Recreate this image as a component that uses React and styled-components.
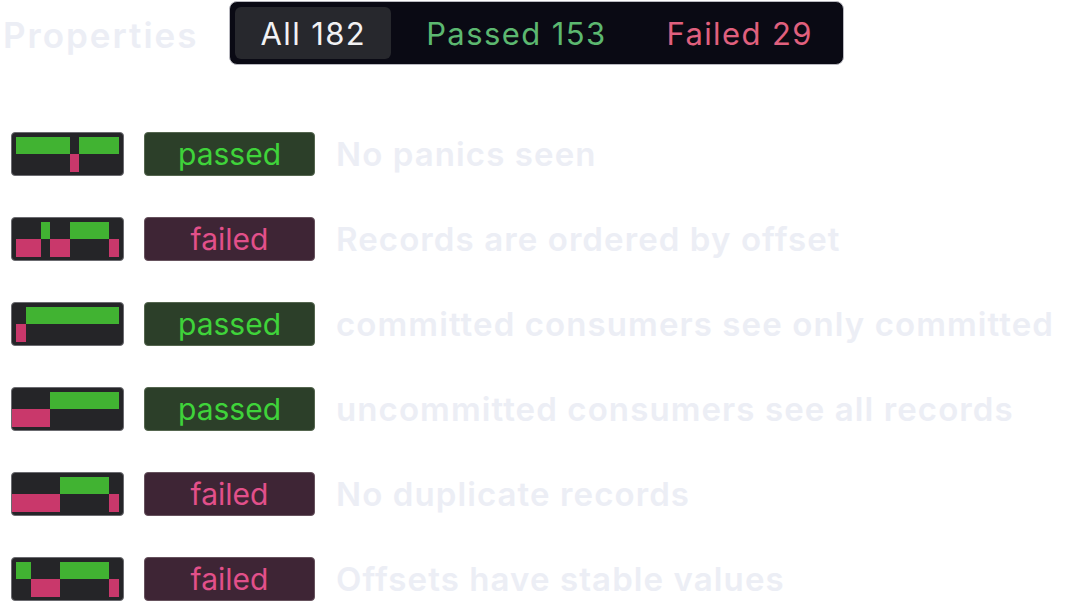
import React from "react";
import styled, { createGlobalStyle } from "styled-components";

const GlobalStyle = createGlobalStyle`
  html, body {
    margin: 0;
    padding: 0;
    background: #ffffff;
    font-family: Inter, "Noto Sans", sans-serif;
  }
`;

const TOP = { y: 5, h: 17, color: "#41b332" };
const BOTTOM = { y: 22, h: 18, color: "#c9386b" };

// segments as [lane, from, to] in px inside the 113x44 timeline
const properties = [
  {
    name: "No panics seen",
    passed: true,
    segments: [["t", 5, 59], ["b", 59, 68], ["t", 68, 108]],
  },
  {
    name: "Records are ordered by offset",
    passed: false,
    segments: [["b", 5, 30], ["t", 30, 39], ["b", 39, 59], ["t", 59, 98], ["b", 98, 108]],
  },
  {
    name: "committed consumers see only committed",
    passed: true,
    segments: [["b", 5, 15], ["t", 15, 108]],
  },
  {
    name: "uncommitted consumers see all records",
    passed: true,
    segments: [["b", 0, 39], ["t", 39, 108]],
  },
  {
    name: "No duplicate records",
    passed: false,
    segments: [["b", 0, 49], ["t", 49, 98], ["b", 98, 108]],
  },
  {
    name: "Offsets have stable values",
    passed: false,
    segments: [["t", 5, 20], ["b", 20, 49], ["t", 49, 98], ["b", 98, 108]],
  },
];

const Timeline = ({ segments }) => (
  <TimelineBox>
    <svg width="113" height="44" viewBox="0 0 113 44">
      {segments.map(([lane, from, to], i) => {
        const l = lane === "t" ? TOP : BOTTOM;
        return <rect key={i} x={from} y={l.y} width={to - from} height={l.h} fill={l.color} />;
      })}
    </svg>
  </TimelineBox>
);

const App = () => {
  const [filter, setFilter] = React.useState("all");

  return (
    <>
      <GlobalStyle />
      <Page>
        <Header>
          <Title>Properties</Title>
          <Tabs>
            <Tab active={filter === "all"} onClick={() => setFilter("all")}>
              All 182
            </Tab>
            <Tab tone="passed" active={filter === "passed"} onClick={() => setFilter("passed")}>
              Passed 153
            </Tab>
            <Tab tone="failed" active={filter === "failed"} onClick={() => setFilter("failed")}>
              Failed 29
            </Tab>
          </Tabs>
        </Header>
        <List>
          {properties.map((p) => (
            <Row key={p.name}>
              <Timeline segments={p.segments} />
              <Badge passed={p.passed}>{p.passed ? "passed" : "failed"}</Badge>
              <Name>{p.name}</Name>
            </Row>
          ))}
        </List>
      </Page>
    </>
  );
};

const Page = styled.div`
  padding: 1px 0 0 0;
`;

const Header = styled.div`
  display: flex;
  align-items: center;
  gap: 30px;
  padding-left: 3px;
`;

const Title = styled.h1`
  margin: 0;
  font-size: 35px;
  font-weight: 600;
  letter-spacing: 2px;
  color: #eceef5;
  padding-top: 3px;
`;

const Tabs = styled.div`
  display: flex;
  gap: 9px;
  padding: 5px;
  height: 64px;
  box-sizing: border-box;
  background: #0a0a14;
  border: 1px solid #b9b9c0;
  border-radius: 8px;
`;

const Tab = styled.button`
  border: none;
  margin: 0;
  padding: 0 25px 0 26px;
  border-radius: 6px;
  font-family: Inter, "Noto Sans", sans-serif;
  font-size: 31px;
  letter-spacing: 1.4px;
  cursor: pointer;
  background: ${(p) => (p.active ? "#27282d" : "transparent")};
  color: ${(p) =>
    p.tone === "passed" ? "#5cb870" : p.tone === "failed" ? "#e0607e" : "#f2f2f4"};
`;

const List = styled.div`
  display: flex;
  flex-direction: column;
  gap: 41px;
  margin-top: 67px;
  padding-left: 11px;
`;

const Row = styled.div`
  display: flex;
  align-items: center;
  height: 44px;
`;

const TimelineBox = styled.div`
  width: 113px;
  height: 44px;
  box-sizing: border-box;
  background: #252528;
  border: 1px solid #6b6b70;
  border-radius: 4px;
  overflow: hidden;
  flex-shrink: 0;

  svg {
    display: block;
    margin: -1px;
  }
`;

const Badge = styled.div`
  display: flex;
  align-items: center;
  justify-content: center;
  width: 171px;
  height: 44px;
  box-sizing: border-box;
  margin-left: 20px;
  border-radius: 4px;
  font-size: 30px;
  flex-shrink: 0;
  background: ${(p) => (p.passed ? "#2c3f29" : "#3e2535")};
  color: ${(p) => (p.passed ? "#3fd33a" : "#e2508a")};
  border: 1px solid ${(p) => (p.passed ? "#55664f" : "#66525d")};
`;

const Name = styled.div`
  margin-left: 21px;
  font-size: 33px;
  font-weight: 600;
  letter-spacing: 1.1px;
  color: #eceef5;
  white-space: nowrap;
`;

export default App;
